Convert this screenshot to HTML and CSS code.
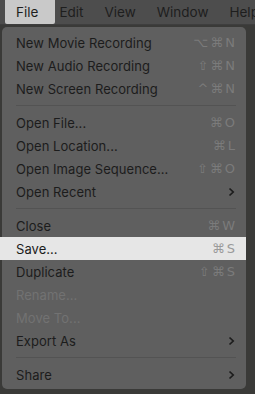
FILE: index.html
```html
<!DOCTYPE html>
<html>
<head>
<meta charset="utf-8">
<link rel="stylesheet" href="styles.css">
</head>
<body>
<div class="bar">
  <span class="bar-item active">File</span>
  <span class="bar-item">Edit</span>
  <span class="bar-item">View</span>
  <span class="bar-item">Window</span>
  <span class="bar-item">Help</span>
</div>
<div class="menu">
  <div class="row"><span>New Movie Recording</span><span class="key">⌥⌘N</span></div>
  <div class="row"><span>New Audio Recording</span><span class="key">⇧⌘N</span></div>
  <div class="row"><span>New Screen Recording</span><span class="key">^⌘N</span></div>
  <div class="sep"></div>
  <div class="row"><span>Open File...</span><span class="key">⌘O</span></div>
  <div class="row"><span>Open Location...</span><span class="key">⌘L</span></div>
  <div class="row"><span>Open Image Sequence...</span><span class="key">⇧⌘O</span></div>
  <div class="row"><span>Open Recent</span><svg class="chev" width="7" height="10" viewBox="0 0 7 10"><polyline points="1.5,1.5 5.2,5 1.5,8.5" fill="none" stroke="#1c1c1c" stroke-width="1.7"/></svg></div>
  <div class="sep"></div>
  <div class="row"><span>Close</span><span class="key">⌘W</span></div>
  <div class="row hl"><span>Save...</span><span class="key">⌘S</span></div>
  <div class="row"><span>Duplicate</span><span class="key">⇧⌘S</span></div>
  <div class="row off"><span>Rename...</span></div>
  <div class="row off"><span>Move To...</span></div>
  <div class="row"><span>Export As</span><svg class="chev" width="7" height="10" viewBox="0 0 7 10"><polyline points="1.5,1.5 5.2,5 1.5,8.5" fill="none" stroke="#1c1c1c" stroke-width="1.7"/></svg></div>
  <div class="sep"></div>
  <div class="row"><span>Share</span><svg class="chev" width="7" height="10" viewBox="0 0 7 10"><polyline points="1.5,1.5 5.2,5 1.5,8.5" fill="none" stroke="#1c1c1c" stroke-width="1.7"/></svg></div>
</div>
</body>
</html>
```

FILE: styles.css
```css
html, body {
  margin: 0;
  padding: 0;
}
body {
  width: 255px;
  height: 394px;
  overflow: hidden;
  background: #3a3a38;
  font-family: "Inter", "Liberation Sans", sans-serif;
  color: #1c1c1c;
}
.bar {
  height: 24px;
  background: #4d4d4d;
  display: flex;
  align-items: center;
  padding-left: 5px;
  border-bottom: 1px solid #3e3e3e;
  overflow: hidden;
  white-space: nowrap;
}
.bar-item {
  font-size: 13.5px;
  line-height: 24px;
  color: #1e1e1e;
  flex: none;
}
.bar-item + .bar-item {
  margin-left: 21px;
}
.bar-item.active + .bar-item {
  margin-left: 4px;
}
.bar-item.active {
  background: #c9c9c9;
  padding: 0 17px 0 11px;
  border-radius: 0 0 2px 2px;
}
.menu {
  margin: 2px 0 0 2px;
  width: 244px;
  background: #5f5f5f;
  border-radius: 5px;
  padding: 4px 0 3px;
}
.row {
  height: 23px;
  display: flex;
  align-items: center;
  justify-content: space-between;
  padding: 0 11px 0 14px;
  font-size: 13px;
  letter-spacing: 0.05px;
}
.row.hl {
  background: #e6e6e6;
  margin-left: -2px;
  padding-left: 16px;
}
.row.off {
  color: #727272;
}
.key {
  font-family: "DejaVu Sans", sans-serif;
  font-size: 13px;
  color: #7b7b7b;
  letter-spacing: 2px;
  margin-right: -2px;
}
.row.hl .key {
  color: #9a9a9a;
}
.sep {
  height: 1px;
  margin: 5px 10px 5px 14px;
  background: #535353;
}
```
